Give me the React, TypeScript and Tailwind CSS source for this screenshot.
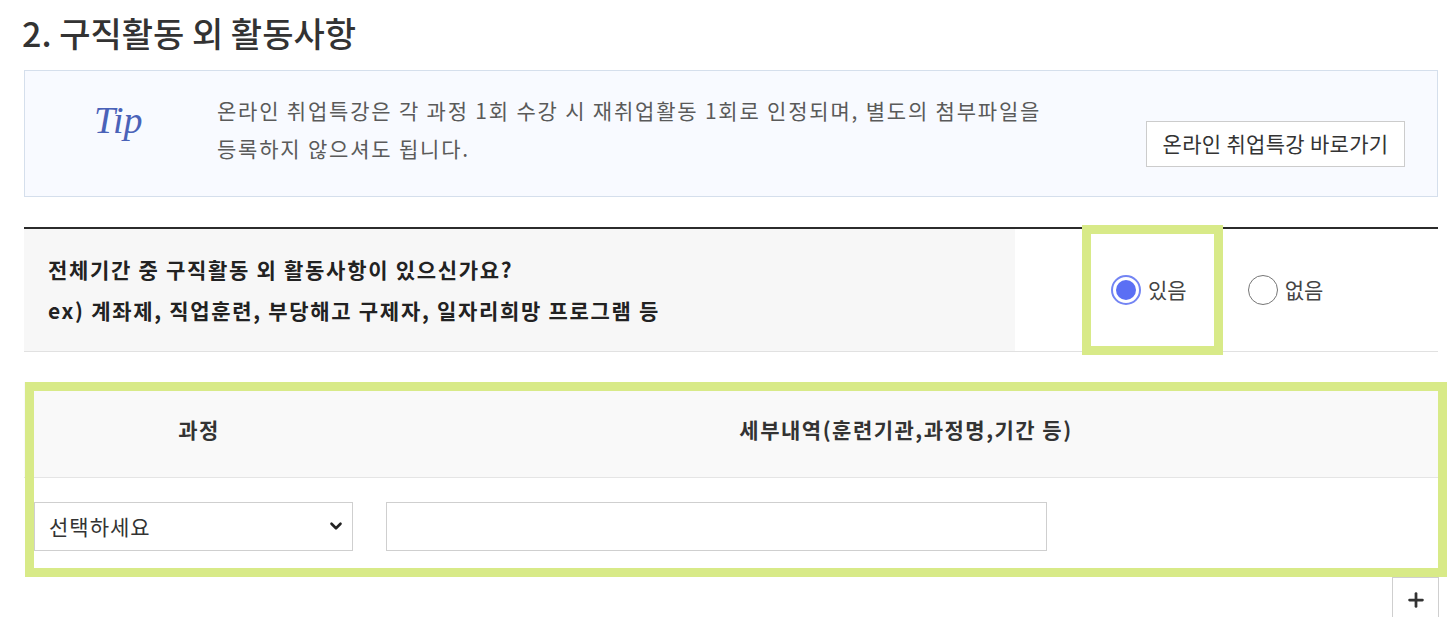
import { ChevronDown, Plus } from "lucide-react";

function Radio({ checked, label }: { checked?: boolean; label: string }) {
  return (
    <label className="flex items-center gap-[7px] cursor-pointer">
      {checked ? (
        <span className="flex h-[30px] w-[30px] items-center justify-center rounded-full border-2 border-[#7384f3] bg-white">
          <span className="h-[20px] w-[20px] rounded-full bg-[#5b6ff4]" />
        </span>
      ) : (
        <span className="h-[30px] w-[30px] rounded-full border-[1.5px] border-[#767676] bg-white" />
      )}
      <span className="text-[21px] text-[#444]">{label}</span>
    </label>
  );
}

export default function App() {
  return (
    <div className="min-h-screen w-full bg-white font-['Noto_Sans_CJK_KR',sans-serif] text-[#333]">
      <div className="w-[1456px] pl-[24px] pr-[18px] pt-[11px]">
        <h2 className="-ml-[2px] text-[34px] font-medium leading-[44px] text-[#333]">
          2. 구직활동 외 활동사항
        </h2>

        {/* tip box */}
        <div className="mt-[15px] flex h-[127px] items-start border border-[#d5dfec] bg-[#f8faff] pt-[20px]">
          <div className="w-[192px] shrink-0 pl-[69px] pt-[9px]">
            <span className="font-['Liberation_Serif',serif] text-[38px] italic leading-[40px] text-[#4a62b8]">
              Tip
            </span>
          </div>
          <p className="flex-1 text-[21px] leading-[38px] text-[#5a5a5a] tracking-[1.8px]">
            온라인 취업특강은 각 과정 1회 수강 시 재취업활동 1회로 인정되며, 별도의 첨부파일을
            <br />
            등록하지 않으셔도 됩니다.
          </p>
          <button className="mr-[32px] mt-[30px] h-[46px] w-[259px] shrink-0 border border-[#cccccc] bg-white text-[21px] tracking-[0.3px] text-[#333]">
            온라인 취업특강 바로가기
          </button>
        </div>

        {/* question row */}
        <div className="relative mt-[30px] flex h-[125px] border-t-2 border-b border-t-[#2b2b2b] border-b-[#e1e1e1]">
          <div className="flex w-[991px] flex-col justify-center bg-[#f7f7f7] pl-[24px] text-[21px] font-semibold leading-[41px] text-[#222] tracking-[1.7px]">
            <p>전체기간 중 구직활동 외 활동사항이 있으신가요?</p>
            <p>ex) 계좌제, 직업훈련, 부당해고 구제자, 일자리희망 프로그램 등</p>
          </div>
          <div className="flex flex-1 items-center gap-[61px] pl-[96px]">
            <Radio checked label="있음" />
            <Radio label="없음" />
          </div>
          <div className="pointer-events-none absolute left-[1058px] top-[-4px] h-[130px] w-[141px] border-[9px] border-[#d8ea88]" />
        </div>

        {/* detail table */}
        <div className="relative mt-[30px]">
          <div className="flex h-[96px] items-center border-b border-[#e5e5e5] bg-[#f9f9f9] text-[21px] font-semibold text-[#333] tracking-[1.5px]">
            <div className="w-[350px] text-center">과정</div>
            <div className="flex-1 text-center">세부내역(훈련기관,과정명,기간 등)</div>
          </div>
          <div className="flex h-[98px] items-start pt-[24px]">
            <div className="w-[350px] pl-[10px]">
              <div className="relative h-[49px] w-[319px]">
                <select className="h-full w-full appearance-none border border-[#cfcfcf] bg-white pl-[14px] text-[21px] text-[#333] tracking-[1px] outline-none">
                  <option>선택하세요</option>
                </select>
                <ChevronDown
                  className="pointer-events-none absolute right-[8px] top-[15px] h-[18px] w-[18px] text-[#222]"
                  strokeWidth={3.5}
                />
              </div>
            </div>
            <div className="pl-[12px]">
              <input className="h-[49px] w-[661px] border border-[#cfcfcf] bg-white outline-none" />
            </div>
          </div>
          <div className="pointer-events-none absolute left-[1px] top-0 h-[195px] w-[1422px] border-[9px] border-[#d8ea88]" />
        </div>

        <div className="flex justify-end">
          <button className="mr-[-1px] mt-[1px] flex h-[46px] w-[47px] items-center justify-center border border-[#cfcfcf] bg-white">
            <Plus className="h-[22px] w-[22px] text-[#333]" strokeWidth={3} />
          </button>
        </div>
      </div>
    </div>
  );
}
